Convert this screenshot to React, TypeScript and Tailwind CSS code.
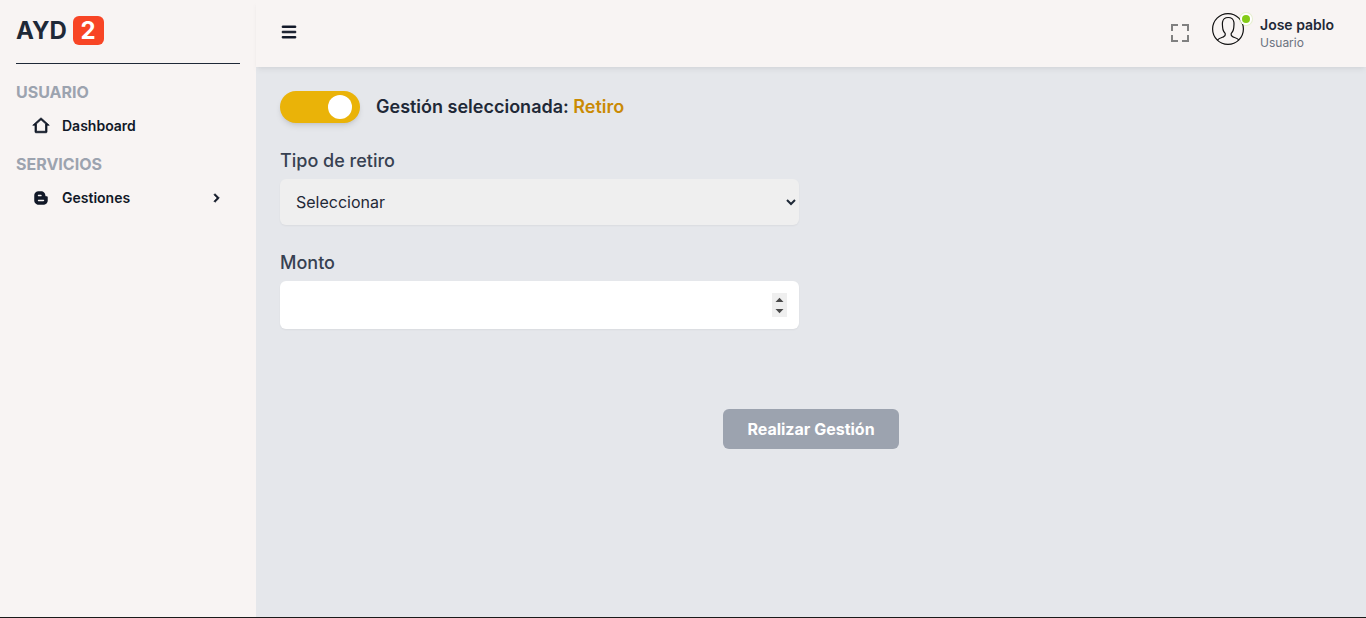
import { BiLogoBlogger, BiChevronRight } from "react-icons/bi";
import { RiHome2Line, RiMenuLine } from "react-icons/ri";

function Sidebar() {
  return (
    <aside className="flex h-full w-64 shrink-0 flex-col bg-[#f8f4f3] p-4">
      <a href="#" className="flex items-center border-b border-[#1f2937] pb-[18px]">
        <h2 className="text-2xl leading-[29px] font-bold text-[#1f2937]">
          AYD <span className="rounded-md bg-[#f84525] px-2 text-white">2</span>
        </h2>
      </a>
      <ul className="mt-4">
        <li>
          <span className="font-bold text-[#9ca3af]">USUARIO</span>
        </li>
        <li className="mb-1">
          <a href="#" className="flex h-11 items-center px-4 text-sm font-semibold text-[#111827]">
            <RiHome2Line className="mr-3 size-[18px] overflow-visible stroke-current stroke-[1]" />
            <span>Dashboard</span>
          </a>
        </li>
        <li>
          <span className="font-bold text-[#9ca3af]">SERVICIOS</span>
        </li>
        <li className="mb-1">
          <a href="#" className="flex h-11 items-center px-4 text-sm font-semibold text-[#111827]">
            <BiLogoBlogger className="mr-3 size-[18px]" />
            <span>Gestiones</span>
            <BiChevronRight className="ml-auto size-[18px] translate-x-px stroke-current stroke-[1]" />
          </a>
        </li>
      </ul>
    </aside>
  );
}

function Avatar() {
  return (
    <div className="relative size-10 p-1">
      <svg viewBox="0 0 32 32" className="size-8" fill="none" stroke="#111" strokeWidth="1.2">
        <circle cx="16" cy="16" r="15.4" />
        <path d="M5.300 27.100c1.500-1.700 4-2.400 6.100-3.200 1.500-.6 2.100-1.500 1.900-2.900-.1-1-1.100-1.700-1.600-2.600-.7-1.200-1-2.700-1.100-4.200-.2-1.600-.4-3.400-.1-5C11 6.300 13 4.500 16.200 4.500s5.200 1.800 5.700 4.700c.3 1.600.1 3.400-.1 5-.1 1.500-.4 3-1.100 4.200-.5.900-1.500 1.600-1.600 2.600-.2 1.400.4 2.300 1.900 2.900 2.100.8 4.600 1.500 6.100 3.200" />
      </svg>
      <span className="absolute top-1 left-8 flex size-3 items-center justify-center rounded-full bg-white ring-1 ring-lime-500/15">
        <span className="size-2 rounded-full bg-[#84cc16]" />
      </span>
    </div>
  );
}

function Header() {
  return (
    <header className="z-10 flex h-[67px] shrink-0 items-center bg-[#f8f4f3] px-6 shadow-md shadow-black/5">
      <button type="button" className="-mt-[3px] text-[#111827]">
        <RiMenuLine className="size-[18px] stroke-current stroke-[1.3]" />
      </button>
      <div className="ml-auto flex items-center pb-0.5">
        <button type="button" className="mr-4">
          <svg viewBox="0 0 24 24" className="size-6" fill="gray">
            <path d="M5 5h5V3H3v7h2zm5 14H5v-5H3v7h7zm11-5h-2v5h-5v2h7zm-2-4h2V3h-7v2h5z" />
          </svg>
        </button>
        <div className="flex items-center">
          <div className="-mt-2">
            <Avatar />
          </div>
          <div className="p-2 pl-3">
            <h2 className="text-sm font-semibold text-[#1f2937]">Jose pablo</h2>
            <p className="text-xs text-[#6b7280]">Usuario</p>
          </div>
        </div>
      </div>
    </header>
  );
}

function AmountInput() {
  return (
    <div className="relative">
      <input
        type="number"
        className="block h-12 w-full rounded-md bg-white p-3 text-base shadow-xs [&::-webkit-inner-spin-button]:opacity-0"
      />
      <svg viewBox="0 0 15 24" className="pointer-events-none absolute top-3 right-3 h-6 w-[15px]">
        <path d="M0 0h15v24H0z" fill="#efefef" />
        <path d="M3.500 9h8l-4-4.200zM3.500 16h8l-4 4.200z" fill="#4a4a4a" />
      </svg>
    </div>
  );
}

function Gestion() {
  return (
    <main className="flex-1 bg-[#e5e7eb] p-6">
      <div className="flex items-center gap-4">
        <button
          type="button"
          role="switch"
          aria-checked="true"
          className="flex h-8 w-20 items-center justify-end rounded-full bg-[#eab308] p-2 shadow-md"
        >
          <span className="size-6 rounded-full bg-white" />
        </button>
        <p className="text-lg font-semibold text-[#1f2937]">
          Gestión seleccionada: <span className="text-[#ca8a04]">Retiro</span>
        </p>
      </div>
      <div className="mt-6 w-[519px]">
        <label className="mb-1 block text-lg leading-7 font-medium text-[#374151]">Tipo de retiro</label>
        <select className="block h-[46px] w-full rounded-md bg-[#efefef] px-3 text-base text-[#1f2937] shadow-xs">
          <option>Seleccionar</option>
        </select>
      </div>
      <div className="mt-6 w-[519px]">
        <label className="mb-1 block text-lg leading-7 font-medium text-[#374151]">Monto</label>
        <AmountInput />
      </div>
      <div className="mt-20 flex justify-center">
        <button type="button" className="rounded-md bg-[#9ca3af] px-6 py-2 font-bold text-white">
          Realizar Gestión
        </button>
      </div>
    </main>
  );
}

export default function App() {
  return (
    <div className="flex h-screen overflow-hidden border-b border-[#1a1a1a] font-['Inter',sans-serif]">
      <Sidebar />
      <div className="flex min-w-0 flex-1 flex-col">
        <Header />
        <Gestion />
      </div>
    </div>
  );
}
